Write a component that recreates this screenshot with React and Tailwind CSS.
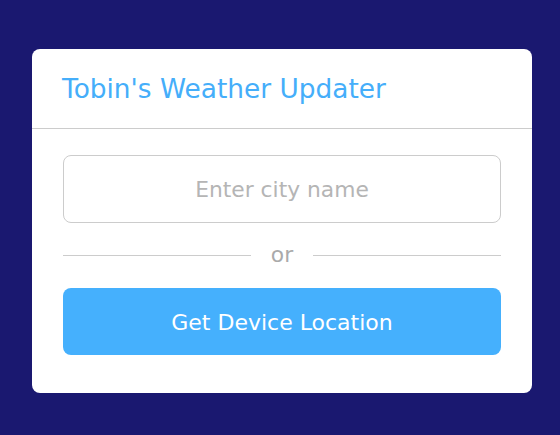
export default function App() {
  return (
    <div
      className="min-h-[435px] w-full bg-[#1a1870] pt-[49px] pl-[32px]"
      style={{ fontFamily: "'DejaVu Sans', 'Liberation Sans', sans-serif" }}
    >
      <div className="w-[500px] rounded-lg bg-white">
        <div className="h-[80px] flex items-center px-[30px] pt-[2px] border-b border-[#cccccc]">
          <h1 className="text-[26.4px] text-[#45aefa] leading-none">Tobin's Weather Updater</h1>
        </div>
        <div className="px-[31px] pt-[26px] pb-[38px]">
          <input
            type="text"
            placeholder="Enter city name"
            className="w-full h-[68px] rounded-lg border border-[#cccccc] text-center text-[21.8px] text-gray-700 placeholder:text-[#b5b5b5] outline-none"
          />
          <div className="flex items-center gap-[20px] h-[65px]">
            <div className="flex-1 h-px bg-[#cccccc]" />
            <span className="text-[21.8px] text-[#aaaaaa]">or</span>
            <div className="flex-1 h-px bg-[#cccccc]" />
          </div>
          <button className="w-full h-[67px] rounded-lg bg-[#45b0fd] text-white text-[22px] pt-[2px]">
            Get Device Location
          </button>
        </div>
      </div>
    </div>
  );
}
